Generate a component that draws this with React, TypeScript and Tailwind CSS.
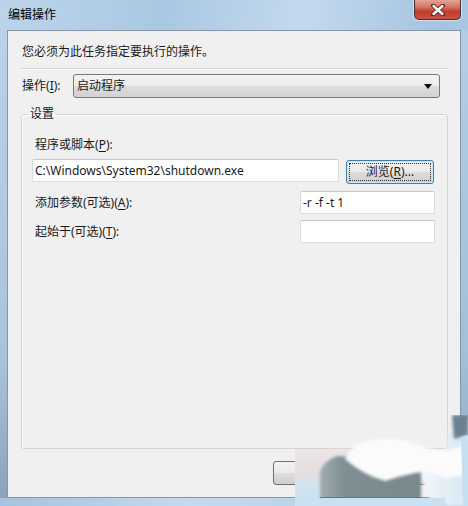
import React from "react";

const font = { fontFamily: '"Noto Sans", "Noto Sans CJK SC", sans-serif' };

function Key({ k }: { k: string }) {
  return (
    <>
      (<span className="underline underline-offset-2">{k}</span>)
    </>
  );
}

function TextBox({ value, className }: { value?: string; className: string }) {
  return (
    <div
      className={`h-[23px] bg-white border border-[#d9dcdf] border-t-[#c5c8cc] rounded-[2px] flex items-center pl-[2px] text-[12px] text-[#1a1a1a] ${className}`}
    >
      {value}
    </div>
  );
}

function CloseButton() {
  return (
    <div className="w-[47px] h-[20px] rounded-b-[5px] border border-t-0 border-[#4b2b2b] shadow-[0_0_0_1px_rgba(255,255,255,0.5)] bg-[linear-gradient(180deg,#e2a596_0%,#d0705f_40%,#c23d2a_60%,#c65344_100%)] flex items-center justify-center">
      <svg width="14" height="12" viewBox="0 0 14 12">
        <path d="M2 1.5 L12 10.5 M12 1.5 L2 10.5" stroke="#5a2020" strokeWidth="4" strokeLinecap="round" />
        <path d="M2.5 2 L11.5 10 M11.5 2 L2.5 10" stroke="#ffffff" strokeWidth="2.4" strokeLinecap="round" />
      </svg>
    </div>
  );
}

// the blurred smear over the lower right corner
function Smudge() {
  return (
    <svg className="absolute right-0 bottom-0" width="173" height="91" viewBox="0 0 173 91">
      <defs>
        <filter id="soft" x="-20%" y="-20%" width="140%" height="140%">
          <feGaussianBlur stdDeviation="1.6" />
        </filter>
        <linearGradient id="fade" x1="0" y1="0" x2="0" y2="1">
          <stop offset="0" stopColor="#ece6e6" />
          <stop offset="0.45" stopColor="#e4dede" />
          <stop offset="0.6" stopColor="#d3e4f1" />
          <stop offset="1" stopColor="#c9e0f2" />
        </linearGradient>
        <linearGradient id="grey" x1="0" y1="0" x2="1" y2="0">
          <stop offset="0" stopColor="#9fadb2" />
          <stop offset="0.25" stopColor="#7f8e93" />
          <stop offset="1" stopColor="#78888d" />
        </linearGradient>
        <linearGradient id="side" x1="0" y1="0" x2="1" y2="0">
          <stop offset="0" stopColor="#f4f6f7" />
          <stop offset="1" stopColor="#d6e8f4" />
        </linearGradient>
      </defs>
      <rect x="0" y="34" width="60" height="57" fill="url(#fade)" />
      <path d="M150 38 L156 8 L173 4 L173 91 L138 91 L124 60 Z" fill="url(#side)" filter="url(#soft)" />
      <path d="M25 91 L25 56 Q30 45 42 41 L62 42 L126 50 L126 91 Z" fill="url(#grey)" filter="url(#soft)" />
      <path
        d="M50 44 Q55 30 75 25 Q100 21 120 29 Q135 35 150 36 L171 30 L171 60 L150 63 Q135 55 120 58 Q105 61 90 66 Q68 60 50 44 Z"
        fill="#fbfbfb"
        filter="url(#soft)"
      />
      <path d="M157 0 L173 0 L173 20 Q166 22 159 24 Z" fill="#6d8190" filter="url(#soft)" />
      <path d="M166 22 L173 20 L173 91 L168 91 Z" fill="#c6dff1" />
      <rect x="0" y="83" width="150" height="8" fill="#c9e1f3" />
      <rect x="25" y="82" width="101" height="1" fill="#657780" />
    </svg>
  );
}

const btn =
  "rounded-[3px] border border-[#707070] bg-[linear-gradient(180deg,#f2f2f2_0%,#ebebeb_50%,#dddddd_51%,#cfcfcf_100%)]";

export default function App() {
  return (
    <div
      className="relative w-[468px] h-[506px] overflow-hidden flex flex-col bg-[linear-gradient(100deg,#bcd4ea_0%,#aac8e3_30%,#c3d9ee_55%,#a5c4e0_80%,#b6cfe7_100%)] text-[#1a1a1a]"
      style={font}
    >
      <div className="h-[30px] flex items-start justify-between">
        <div className="pl-[8px] pt-[6px] text-[12px] leading-[18px] text-black">编辑操作</div>
        <div className="mr-[7px]">
          <CloseButton />
        </div>
      </div>

      <div className="flex-1 flex">
        <div className="w-[7px] bg-[linear-gradient(180deg,#b9d2ea,#a8c3dc_70%,#8aa3b8)]" />
        <div className="flex-1 flex flex-col bg-[#f0f0f0] border border-[#8795a6]">
          <div className="pl-[14px] mt-[13px] text-[12px] leading-[16px]">您必须为此任务指定要执行的操作。</div>
          <div className="ml-[12px] mr-[12px] mt-[8px] border-t border-[#d5d5d5] border-b border-b-white" />

          <div className="mt-[4px] pl-[14px] flex items-center h-[24px]">
            <div className="w-[51px] text-[12px]">
              操作<Key k="I" />:
            </div>
            <div className="w-[367px] h-[24px] rounded-[3px] border border-[#7a7a7a] bg-[linear-gradient(180deg,#f3f3f3_0%,#ebebeb_50%,#dddddd_51%,#d2d2d2_100%)] flex items-center justify-between pl-[3px] pr-[7px] text-[12px]">
              <span>启动程序</span>
              <svg width="8" height="5" viewBox="0 0 8 5">
                <path d="M0 0 H8 L4 5 Z" fill="#111" />
              </svg>
            </div>
          </div>

          <fieldset className="mt-[7px] ml-[13px] mr-[12px] flex-1 border border-[#d5d5d5] rounded-[3px] shadow-[inset_1px_1px_0_#ffffff]">
            <legend className="ml-[6px] px-[2px] text-[12px] leading-[18px]">设置</legend>
            <div className="pl-[13px] mt-[14px] text-[12px] leading-[16px]">
              程序或脚本<Key k="P" />:
            </div>
            <div className="mt-[6px] ml-[10px] flex items-start gap-[7px]">
              <TextBox value="C:\Windows\System32\shutdown.exe" className="w-[307px] text-[12.3px]" />
              <div className="mt-[1px] w-[88px] h-[24px] rounded-[3px] border border-[#3c7fb1] bg-[linear-gradient(180deg,#f2f2f2_0%,#ebebeb_50%,#dddddd_51%,#cfcfcf_100%)] p-[2px] shadow-[inset_0_0_0_1px_#c8e6f5]">
                <div className="w-full h-full border border-dotted border-[#333] flex items-center justify-center text-[12px]">
                  浏览<Key k="R" />...
                </div>
              </div>
            </div>
            <div className="mt-[7px] flex items-center">
              <div className="pl-[13px] w-[278px] text-[12px]">
                添加参数(可选)<Key k="A" />:
              </div>
              <TextBox value="-r -f -t 1" className="w-[135px]" />
            </div>
            <div className="mt-[6px] flex items-center">
              <div className="pl-[13px] w-[278px] text-[12px]">
                起始于(可选)<Key k="T" />:
              </div>
              <TextBox className="w-[135px]" />
            </div>
          </fieldset>

          <div className="mt-[12px] mb-[12px] mr-[12px] flex justify-end gap-[7px]">
            <div className={`w-[84px] h-[24px] flex items-center justify-center text-[12px] ${btn}`}>确定</div>
            <div className={`w-[84px] h-[24px] flex items-center justify-center text-[12px] ${btn}`}>取消</div>
          </div>
        </div>
        <div className="w-[7px] bg-[linear-gradient(180deg,#b3cde6,#a3bfd9_70%,#8ea8be)]" />
      </div>
      <div className="h-[8px] bg-[linear-gradient(90deg,#a7c2dc,#c4daee_40%,#b0cbe4)]" />

      <Smudge />
    </div>
  );
}
